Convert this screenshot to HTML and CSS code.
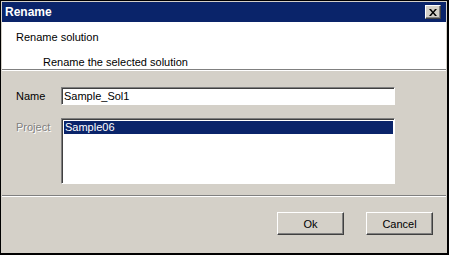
FILE: index.html
```html
<!DOCTYPE html>
<html>

<head>
    <title>Rename</title>
    <link rel="stylesheet" href="styles.css">
</head>

<body>
    <div class="window">
        <div class="titlebar">
            <span class="title">Rename</span>
            <button class="close" type="button">
                <svg width="8" height="7" viewBox="0 0 8 7">
                    <path d="M0 0h2l2 2.5 2-2.5h2l-3 3.5 3 3.5h-2l-2-2.5-2 2.5h-2l3-3.5z" fill="#000" />
                </svg>
            </button>
        </div>

        <div class="header">
            <div class="header-title">Rename solution</div>
            <div class="header-desc">Rename the selected solution</div>
        </div>

        <div class="content">
            <div class="form">
                <label class="label">Name</label>
                <input class="field" type="text" value="Sample_Sol1">
                <label class="label disabled">Project</label>
                <div class="listbox">
                    <div class="item selected">Sample06</div>
                </div>
            </div>
        </div>

        <div class="footer">
            <button class="btn" type="button">Ok</button>
            <button class="btn" type="button">Cancel</button>
        </div>
    </div>
</body>

</html>
```

FILE: styles.css
```css
body {
    margin: 0;
    padding: 0;
    font-family: Tahoma, "Liberation Sans", Arial, sans-serif;
    font-size: 11px;
    color: #000;
    background-color: #d4d0c8;
}

.window {
    width: 449px;
    height: 255px;
    box-sizing: border-box;
    border: 1px solid #000;
    border-right-width: 2px;
    border-bottom-width: 2px;
    background-color: #d4d0c8;
    padding: 1px 1px 0 1px;
    display: flex;
    flex-direction: column;
}

.titlebar {
    height: 20px;
    background-color: #0a246a;
    display: flex;
    align-items: center;
    justify-content: space-between;
    padding: 0 5px 0 3px;
}

.title {
    color: #fff;
    font-weight: bold;
    font-size: 12px;
}

.close {
    width: 16px;
    height: 14px;
    padding: 0;
    background-color: #d4d0c8;
    border: 1px solid;
    border-color: #fff #404040 #404040 #fff;
    box-shadow: inset -1px -1px 0 #808080;
    display: flex;
    align-items: center;
    justify-content: center;
}

.header {
    height: 48px;
    background-color: #fff;
    border-bottom: 1px solid #808080;
    box-shadow: 0 1px 0 #fff;
    padding: 9px 0 0 14px;
    box-sizing: border-box;
}

.header-title {
    line-height: 13px;
}

.header-desc {
    line-height: 13px;
    margin: 12px 0 0 27px;
}

.content {
    height: 125px;
    padding: 16px 0 0 14px;
    box-sizing: border-box;
    border-bottom: 1px solid #808080;
    margin-top: 1px;
}

.form {
    display: grid;
    grid-template-columns: 45px 334px;
    row-gap: 13px;
    align-items: start;
}

.label {
    line-height: 18px;
}

.label.disabled {
    color: #808080;
    text-shadow: 1px 1px 0 #fff;
}

.field {
    height: 18px;
    box-sizing: border-box;
    margin: 0;
    padding: 1px 2px;
    font-family: inherit;
    font-size: 11px;
    background-color: #fff;
    border: 1px solid;
    border-color: #808080 #fff #fff #808080;
    box-shadow: inset 1px 1px 0 #404040;
    outline: none;
}

.listbox {
    height: 66px;
    box-sizing: border-box;
    background-color: #fff;
    border: 1px solid;
    border-color: #808080 #fff #fff #808080;
    box-shadow: inset 1px 1px 0 #404040;
    padding: 2px 1px 0 2px;
}

.item {
    line-height: 13px;
    padding-left: 1px;
}

.item.selected {
    background-color: #0a246a;
    color: #fff;
}

.footer {
    border-top: 1px solid #fff;
    flex: 1;
    display: flex;
    justify-content: flex-end;
    align-items: flex-start;
    gap: 22px;
    padding: 15px 13px 0 0;
}

.btn {
    width: 67px;
    height: 23px;
    font-family: inherit;
    font-size: 11px;
    background-color: #d4d0c8;
    border: 1px solid;
    border-color: #fff #404040 #404040 #fff;
    box-shadow: inset -1px -1px 0 #808080;
    padding: 0;
}
```
